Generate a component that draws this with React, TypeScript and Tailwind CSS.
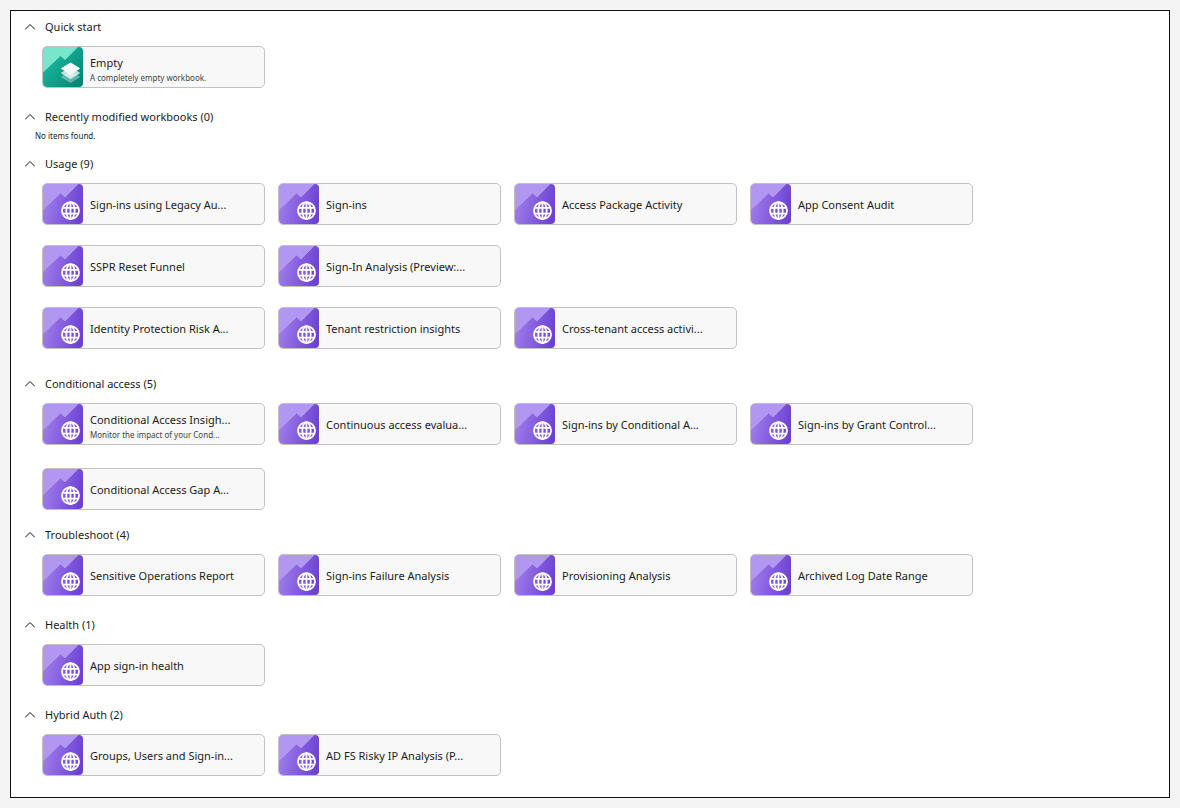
import { useState } from 'react';
import type { ReactNode } from 'react';

interface Workbook {
  title: string;
  description?: string;
  kind?: 'empty' | 'public';
}

interface SectionProps {
  title: string;
  className?: string;
  children: ReactNode;
}

const usage: Workbook[][] = [
  [
    { title: 'Sign-ins using Legacy Au...' },
    { title: 'Sign-ins' },
    { title: 'Access Package Activity' },
    { title: 'App Consent Audit' },
  ],
  [{ title: 'SSPR Reset Funnel' }, { title: 'Sign-In Analysis (Preview:...' }],
  [
    { title: 'Identity Protection Risk A...' },
    { title: 'Tenant restriction insights' },
    { title: 'Cross-tenant access activi...' },
  ],
];

const conditionalAccess: Workbook[][] = [
  [
    { title: 'Conditional Access Insigh...', description: 'Monitor the impact of your Cond...' },
    { title: 'Continuous access evalua...' },
    { title: 'Sign-ins by Conditional A...' },
    { title: 'Sign-ins by Grant Control...' },
  ],
  [{ title: 'Conditional Access Gap A...' }],
];

const troubleshoot: Workbook[][] = [
  [
    { title: 'Sensitive Operations Report' },
    { title: 'Sign-ins Failure Analysis' },
    { title: 'Provisioning Analysis' },
    { title: 'Archived Log Date Range' },
  ],
];

const hybridAuth: Workbook[][] = [
  [{ title: 'Groups, Users and Sign-in...' }, { title: 'AD FS Risky IP Analysis (P...' }],
];

function GlobeTile() {
  return (
    <svg viewBox="0 0 40 40" className="h-10 w-10 shrink-0 rounded-[4px]" aria-hidden="true">
      <defs>
        <linearGradient id="purple" x1="0" y1="0.4" x2="1" y2="0.6">
          <stop offset="0" stopColor="#a07eec" />
          <stop offset="1" stopColor="#6b40d2" />
        </linearGradient>
      </defs>
      <rect width="40" height="40" fill="url(#purple)" />
      <path d="M0 0H35L22 13L17.5 9L0 25.5Z" fill="#b196f2" />
      <path d="M35 0L22 13L17.5 9L0 25.5" fill="none" stroke="#c6b2f7" strokeWidth="0.5" />
      <g fill="none" stroke="#fff" strokeWidth="1.8">
        <circle cx="27.5" cy="26.7" r="8.5" />
        <ellipse cx="27.5" cy="26.7" rx="4.2" ry="8.5" />
        <path d="M27.5 18V35M19.5 23.8H35.5M19.5 29.6H35.5" />
      </g>
    </svg>
  );
}

function LayersTile() {
  return (
    <svg viewBox="0 0 40 40" className="h-10 w-10 shrink-0 rounded-[4px]" aria-hidden="true">
      <defs>
        <linearGradient id="teal" x1="0" y1="0.2" x2="1" y2="1">
          <stop offset="0" stopColor="#1bbfa3" />
          <stop offset="1" stopColor="#04806f" />
        </linearGradient>
      </defs>
      <rect width="40" height="40" fill="url(#teal)" />
      <path d="M0 0H35L22 13L17.5 9L0 25.5Z" fill="#78e6cb" />
      <g fill="#fff" stroke="#fff" strokeWidth="1" strokeLinejoin="round">
        <path d="M27.5 24.5L36.5 30L27.5 35.5L18.5 30Z" opacity="0.35" />
        <path d="M27.5 20.5L36.5 26L27.5 31.5L18.5 26Z" opacity="0.75" />
        <path d="M27.5 16L36.5 21.5L27.5 27L18.5 21.5Z" />
      </g>
    </svg>
  );
}

function WorkbookCard({ title, description, kind = 'public' }: Workbook) {
  return (
    <button className="flex h-[42px] w-[223px] shrink-0 items-center overflow-hidden rounded-[5px] border border-[#c1c1c1] bg-[#f8f8f8] text-left hover:bg-gray-100">
      {kind === 'empty' ? <LayersTile /> : <GlobeTile />}
      <span className={`flex min-w-0 flex-col pl-[7px] whitespace-nowrap ${description ? 'pt-[6px]' : 'pt-[2px]'}`}>
        <span className="leading-4">{title}</span>
        {description && <span className="text-[8px] leading-[14px] text-[#444]">{description}</span>}
      </span>
    </button>
  );
}

function WorkbookRows({ rows, className = '' }: { rows: Workbook[][]; className?: string }) {
  return (
    <div className={`flex flex-col pt-[9px] pl-[31px] ${className}`}>
      {rows.map((row) => (
        <div key={row[0].title} className="flex flex-wrap gap-[13px]">
          {row.map((workbook) => (
            <WorkbookCard key={workbook.title} {...workbook} />
          ))}
        </div>
      ))}
    </div>
  );
}

function Section({ title, className = '', children }: SectionProps) {
  const [open, setOpen] = useState(true);

  return (
    <section className={className}>
      <h2>
        <button
          onClick={() => setOpen(!open)}
          aria-expanded={open}
          className="flex h-5 items-center gap-[10px] pl-[14px]"
        >
          <svg
            viewBox="0 0 10 10"
            className={open ? 'h-[10px] w-[10px]' : 'h-[10px] w-[10px] rotate-180'}
            fill="none"
            stroke="#111"
            aria-hidden="true"
          >
            <path d="M0 7.5L5 2.5L10 7.5" />
          </svg>
          {title}
        </button>
      </h2>
      {open && children}
    </section>
  );
}

export default function App() {
  return (
    <div className="min-h-screen bg-[#f4f4f4] p-[10px] font-['Noto_Sans',sans-serif] text-[11px] text-[#1b1b1b]">
      <main className="border border-[#111] bg-white pt-[6px] pb-[21px]">
        <Section title="Quick start" className="pb-[19px]">
          <WorkbookRows
            rows={[[{ title: 'Empty', description: 'A completely empty workbook.', kind: 'empty' }]]}
          />
        </Section>
        <Section title="Recently modified workbooks (0)" className="pb-[9px]">
          <p className="pl-6 text-[8px] leading-[18px]">No items found.</p>
        </Section>
        <Section title="Usage (9)" className="pb-[25px]">
          <WorkbookRows rows={usage} className="gap-5" />
        </Section>
        <Section title="Conditional access (5)" className="pb-[15px]">
          <WorkbookRows rows={conditionalAccess} className="gap-[23px]" />
        </Section>
        <Section title="Troubleshoot (4)" className="pb-[19px]">
          <WorkbookRows rows={troubleshoot} />
        </Section>
        <Section title="Health (1)" className="pb-[19px]">
          <WorkbookRows rows={[[{ title: 'App sign-in health' }]]} />
        </Section>
        <Section title="Hybrid Auth (2)">
          <WorkbookRows rows={hybridAuth} />
        </Section>
      </main>
    </div>
  );
}
